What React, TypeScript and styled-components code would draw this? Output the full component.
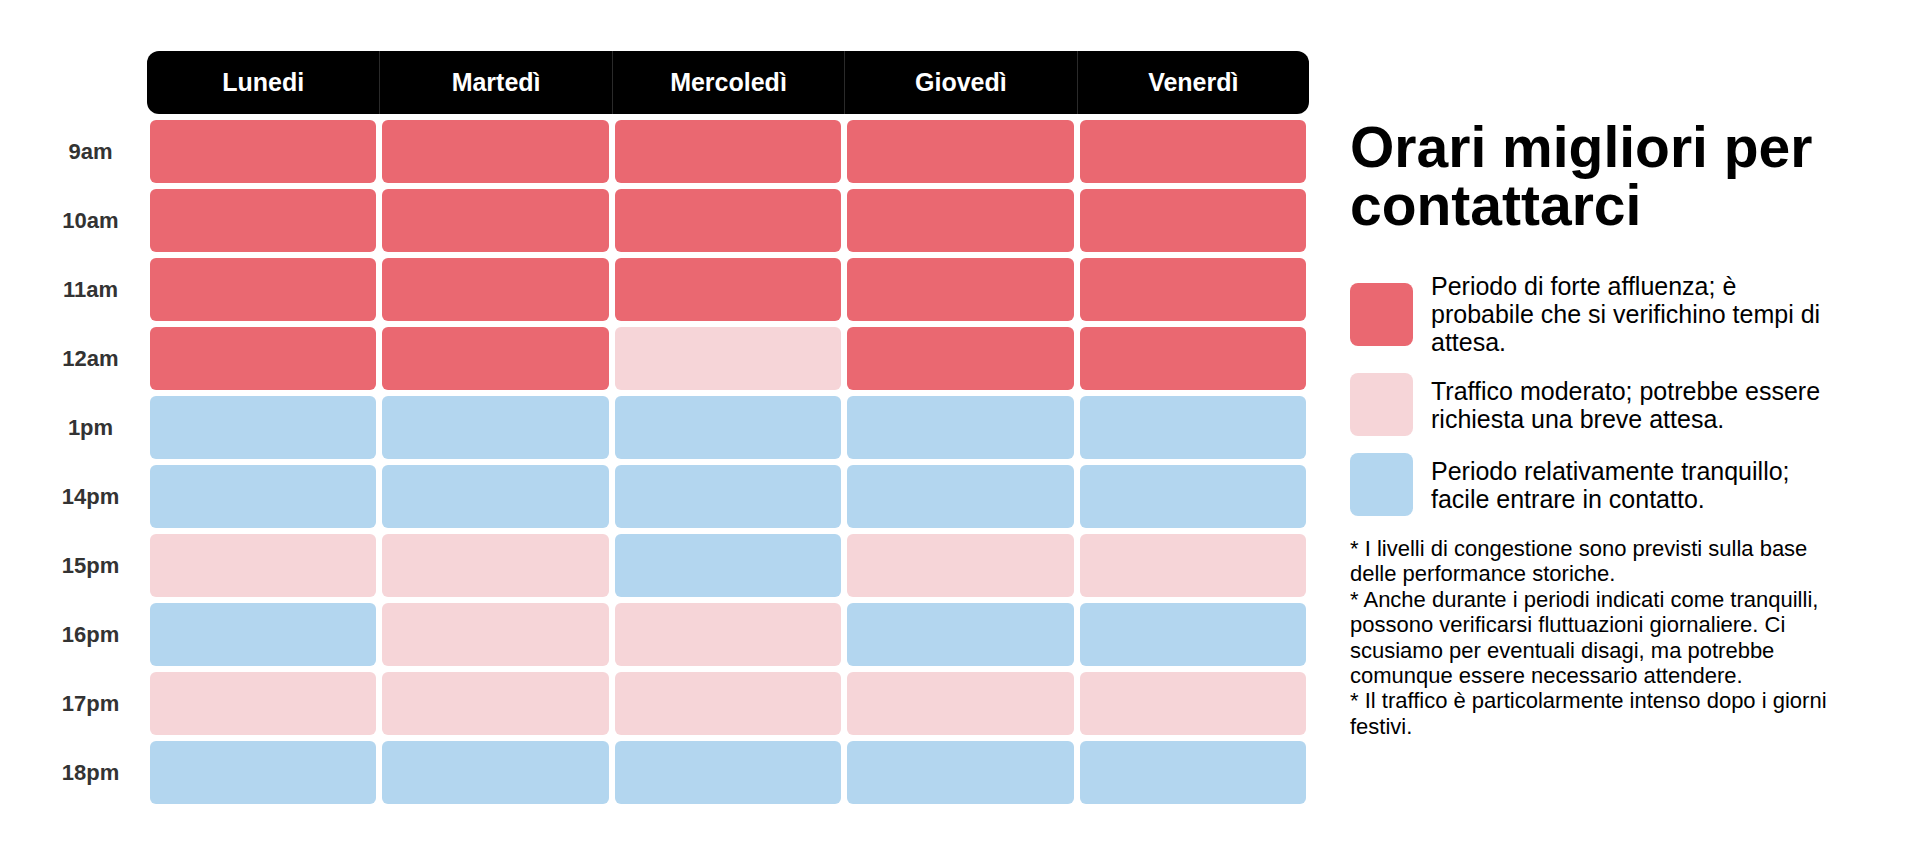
import React from 'react'
import styled, { createGlobalStyle } from 'styled-components'

type Level = 'high' | 'mid' | 'low'

const colors: Record<Level, string> = {
    high: '#ea6871',
    mid: '#f6d5d8',
    low: '#b3d6ef',
}

const days = ['Lunedi', 'Martedì', 'Mercoledì', 'Giovedì', 'Venerdì']

const rows: { time: string; cells: Level[] }[] = [
    { time: '9am', cells: ['high', 'high', 'high', 'high', 'high'] },
    { time: '10am', cells: ['high', 'high', 'high', 'high', 'high'] },
    { time: '11am', cells: ['high', 'high', 'high', 'high', 'high'] },
    { time: '12am', cells: ['high', 'high', 'mid', 'high', 'high'] },
    { time: '1pm', cells: ['low', 'low', 'low', 'low', 'low'] },
    { time: '14pm', cells: ['low', 'low', 'low', 'low', 'low'] },
    { time: '15pm', cells: ['mid', 'mid', 'low', 'mid', 'mid'] },
    { time: '16pm', cells: ['low', 'mid', 'mid', 'low', 'low'] },
    { time: '17pm', cells: ['mid', 'mid', 'mid', 'mid', 'mid'] },
    { time: '18pm', cells: ['low', 'low', 'low', 'low', 'low'] },
]

const legend: { level: Level; text: string }[] = [
    { level: 'high', text: 'Periodo di forte affluenza; è probabile che si verifichino tempi di attesa.' },
    { level: 'mid', text: 'Traffico moderato; potrebbe essere richiesta una breve attesa.' },
    { level: 'low', text: 'Periodo relativamente tranquillo; facile entrare in contatto.' },
]

const GlobalStyle = createGlobalStyle`
    body {
        margin: 0;
        background: #fff;
        font-family: "Liberation Sans", Arial, sans-serif;
    }
`

const Page = styled.div`
    display: flex;
    align-items: flex-start;
    padding: 51px 0 0 34px;
`
const Schedule = styled.div`
    display: flex;
    flex-direction: column;
    width: 1275px;
`
const Row = styled.div<{ $height: number }>`
    display: grid;
    grid-template-columns: 113px 1fr;
    height: ${p => p.$height}px;
`
const HeaderRow = styled(Row)`
    margin-bottom: 3px;
`
const HeaderBar = styled.div`
    display: grid;
    grid-template-columns: repeat(5, 1fr);
    background: #000;
    border-radius: 12px;
    overflow: hidden;
`
const DayName = styled.div`
    display: flex;
    align-items: center;
    justify-content: center;
    color: #fff;
    font-weight: bold;
    font-size: 25px;
    & + & {
        border-left: 1px solid #2a2a2a;
    }
`
const TimeLabel = styled.div`
    display: flex;
    align-items: center;
    justify-content: center;
    color: #333;
    font-weight: bold;
    font-size: 22px;
`
const Cells = styled.div`
    display: grid;
    grid-template-columns: repeat(5, 1fr);
`
const Cell = styled.div<{ $level: Level }>`
    margin: 3px;
    border-radius: 6px;
    background: ${p => colors[p.$level]};
`
const Side = styled.div`
    width: 485px;
    margin-left: 41px;
    padding-top: 67px;
`
const Title = styled.h1`
    margin: 0;
    font-size: 57px;
    line-height: 58px;
    font-weight: bold;
    color: #000;
`
const Legend = styled.div`
    display: flex;
    flex-direction: column;
    gap: 17px;
    margin-top: 38px;
    width: 480px;
`
const LegendItem = styled.div`
    display: flex;
    align-items: center;
    gap: 18px;
`
const Swatch = styled.div<{ $level: Level }>`
    flex: 0 0 63px;
    height: 63px;
    border-radius: 8px;
    background: ${p => colors[p.$level]};
`
const LegendText = styled.div`
    font-size: 25px;
    line-height: 28px;
    color: #000;
`
const Notes = styled.div`
    margin-top: 20px;
    font-size: 22px;
    line-height: 25.4px;
    color: #000;
`

const App = () => {
    return (
        <>
            <GlobalStyle />
            <Page>
                <Schedule>
                    <HeaderRow $height={63}>
                        <div />
                        <HeaderBar>
                            {days.map(d => <DayName key={d}>{d}</DayName>)}
                        </HeaderBar>
                    </HeaderRow>
                    {rows.map(r => (
                        <Row $height={69} key={r.time}>
                            <TimeLabel>{r.time}</TimeLabel>
                            <Cells>
                                {r.cells.map((c, i) => <Cell key={i} $level={c} />)}
                            </Cells>
                        </Row>
                    ))}
                </Schedule>
                <Side>
                    <Title>Orari migliori per contattarci</Title>
                    <Legend>
                        {legend.map(l => (
                            <LegendItem key={l.level}>
                                <Swatch $level={l.level} />
                                <LegendText>{l.text}</LegendText>
                            </LegendItem>
                        ))}
                    </Legend>
                    <Notes>
                        * I livelli di congestione sono previsti sulla base delle performance storiche.<br />
                        * Anche durante i periodi indicati come tranquilli, possono verificarsi fluttuazioni giornaliere. Ci scusiamo per eventuali disagi, ma potrebbe comunque essere necessario attendere.<br />
                        * Il traffico è particolarmente intenso dopo i giorni festivi.
                    </Notes>
                </Side>
            </Page>
        </>
    )
}

export default App
